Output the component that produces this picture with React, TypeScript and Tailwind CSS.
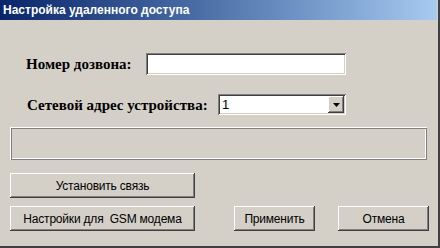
import React from "react";

const raised =
  "bg-[#d4d0c8] shadow-[inset_-1px_-1px_#404040,inset_1px_1px_#ffffff,inset_-2px_-2px_#808080,inset_2px_2px_#d4d0c8]";
const sunken =
  "bg-white shadow-[inset_1px_1px_#808080,inset_-1px_-1px_#ffffff,inset_2px_2px_#404040,inset_-2px_-2px_#d4d0c8]";

const WinButton = ({ label, w }: { label: string; w: string }) => (
  <div
    className={`${raised} ${w} h-[25px] flex items-center justify-center whitespace-pre text-[12px] tracking-[-0.2px] text-black font-['Liberation_Sans',Arial,sans-serif]`}
  >
    {label}
  </div>
);

export default function App() {
  return (
    <div className="w-[440px] h-[248px] bg-[#d4d0c8] flex flex-col overflow-hidden border-r-[2px] border-b-[2px] border-r-[#404040] border-b-[#404040]">
      {/* Title bar */}
      <div className="h-[20px] mr-[1px] bg-gradient-to-r from-[#0a246a] to-[#a6caf0] flex items-center pl-[3px] text-white text-[12px] font-bold font-['Liberation_Sans',Arial,sans-serif]">
        Настройка удаленного доступа
      </div>

      {/* Phone number */}
      <div className="mt-[33px] pl-[26px] flex items-center font-['Liberation_Serif','Times_New_Roman',serif] font-bold text-[15px] text-black">
        <span className="w-[120px]">Номер дозвона:</span>
        <div className={`${sunken} w-[200px] h-[22px]`} />
      </div>

      {/* Device address */}
      <div className="mt-[18px] pl-[27px] flex items-center font-['Liberation_Serif','Times_New_Roman',serif] font-bold text-[15px] text-black">
        <span className="w-[191px]">Сетевой адрес устройства:</span>
        <div className={`${sunken} w-[128px] h-[21px] flex items-center justify-between p-[2px]`}>
          <span className="pl-[2px] font-normal text-[13px] font-['Liberation_Sans',Arial,sans-serif]">1</span>
          <div className={`${raised} w-[16px] h-[17px] flex items-center justify-center`}>
            <svg width="7" height="4" viewBox="0 0 7 4">
              <path d="M0 0h7L3.5 4z" fill="#000" />
            </svg>
          </div>
        </div>
      </div>

      {/* Status frame */}
      <div className="mt-[11px] ml-[10px] w-[417px] h-[33px] shadow-[inset_1px_1px_#ffffff,inset_-1px_-1px_#808080,inset_2px_2px_#808080,inset_-2px_-2px_#ffffff]" />

      {/* Buttons */}
      <div className="mt-[13px] pl-[10px]">
        <WinButton label="Установить связь" w="w-[185px]" />
      </div>
      <div className="mt-[8px] pl-[10px] flex">
        <WinButton label="Настройки для  GSM модема" w="w-[185px]" />
        <div className="ml-[39px]">
          <WinButton label="Применить" w="w-[81px]" />
        </div>
        <div className="ml-[23px]">
          <WinButton label="Отмена" w="w-[91px]" />
        </div>
      </div>
    </div>
  );
}
